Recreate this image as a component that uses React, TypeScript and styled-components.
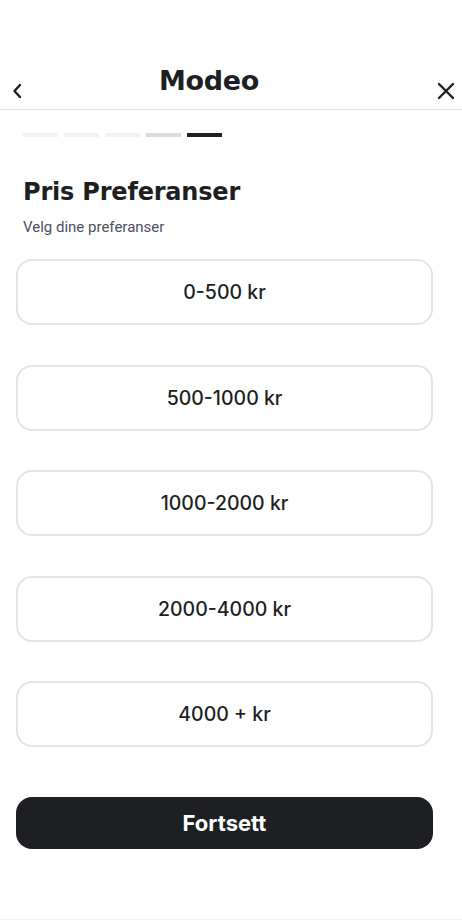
import React, { useState } from 'react';
import styled, { createGlobalStyle } from 'styled-components';

const GlobalStyle = createGlobalStyle`
  html, body {
    margin: 0;
    padding: 0;
    background: #ffffff;
  }
  * {
    box-sizing: border-box;
  }
`;

const Page = styled.div`
  width: 462px;
  height: 920px;
  display: flex;
  flex-direction: column;
  background: #ffffff;
  font-family: Inter, 'Noto Sans', sans-serif;
  color: #1e1f23;
  border-bottom: 1px solid #f3f3f4;
`;

const Header = styled.header`
  height: 110px;
  display: grid;
  grid-template-columns: 40px 1fr 40px;
  align-items: end;
  padding: 0 4px 0 4px;
  border-bottom: 1px solid #e6e6e8;
`;

const IconButton = styled.button<{ $align: 'start' | 'end' }>`
  height: 36px;
  display: flex;
  align-items: center;
  justify-content: ${(p) => (p.$align === 'start' ? 'flex-start' : 'flex-end')};
  padding: 0;
  background: none;
  border: none;
  color: #1e1f23;
  cursor: pointer;
`;

const Logo = styled.h1`
  margin: 0 0 10px;
  text-align: center;
  font-family: 'DejaVu Sans', sans-serif;
  font-weight: 700;
  font-size: 27px;
  letter-spacing: -0.3px;
  line-height: 36px;
  padding-right: 44px;
`;

const Steps = styled.div`
  display: flex;
  gap: 6px;
  padding: 23px 23px 0;
`;

const Step = styled.div<{ $tone: 'idle' | 'prev' | 'active' }>`
  width: 35px;
  height: 4px;
  background: ${(p) =>
    p.$tone === 'active' ? '#1e1f23' : p.$tone === 'prev' ? '#dcdcdd' : '#f2f2f2'};
`;

const Content = styled.main`
  display: flex;
  flex-direction: column;
  padding: 40px 29px 0 16px;
`;

const Title = styled.h2`
  margin: 0 0 0 7px;
  font-family: 'DejaVu Sans', sans-serif;
  font-weight: 700;
  font-size: 24px;
  letter-spacing: -0.2px;
  line-height: 30px;
`;

const Subtitle = styled.p`
  margin: 10px 0 0 7px;
  font-family: Roboto, sans-serif;
  font-size: 15px;
  line-height: 20px;
  color: #4b5160;
`;

const Options = styled.div`
  display: flex;
  flex-direction: column;
  gap: 39.5px;
  margin-top: 22px;
`;

const Option = styled.button<{ $selected: boolean }>`
  height: 66px;
  width: 100%;
  display: flex;
  align-items: center;
  justify-content: center;
  background: #ffffff;
  border: 2px solid ${(p) => (p.$selected ? '#1e1f23' : '#e3e4e8')};
  border-radius: 16px;
  font-family: Inter, sans-serif;
  font-weight: 500;
  font-size: 19.5px;
  color: #1e1f23;
  cursor: pointer;
`;

const Primary = styled.button`
  margin-top: 50px;
  height: 52px;
  width: 100%;
  border: none;
  border-radius: 16px;
  background: #1e1f23;
  color: #ffffff;
  font-family: Inter, sans-serif;
  font-weight: 700;
  font-size: 22px;
  cursor: pointer;
`;

const ranges = ['0-500 kr', '500-1000 kr', '1000-2000 kr', '2000-4000 kr', '4000 + kr'];

const ChevronLeft = () => (
  <svg width="24" height="24" viewBox="0 0 24 24" fill="none" stroke="currentColor" strokeWidth="2.4" strokeLinecap="round" strokeLinejoin="round">
    <path d="M16 6l-5.5 6 5.5 6" />
  </svg>
);

const Close = () => (
  <svg width="24" height="24" viewBox="0 0 24 24" fill="none" stroke="currentColor" strokeWidth="2.4" strokeLinecap="round">
    <path d="M5 5l14 14M19 5L5 19" />
  </svg>
);

const App: React.FC = () => {
  const [selected, setSelected] = useState<number | null>(null);

  return (
    <>
      <GlobalStyle />
      <Page>
        <Header>
          <IconButton $align="start" aria-label="Tilbake">
            <ChevronLeft />
          </IconButton>
          <Logo>Modeo</Logo>
          <IconButton $align="end" aria-label="Lukk">
            <Close />
          </IconButton>
        </Header>
        <Steps>
          <Step $tone="idle" />
          <Step $tone="idle" />
          <Step $tone="idle" />
          <Step $tone="prev" />
          <Step $tone="active" />
        </Steps>
        <Content>
          <Title>Pris Preferanser</Title>
          <Subtitle>Velg dine preferanser</Subtitle>
          <Options>
            {ranges.map((r, i) => (
              <Option key={r} $selected={selected === i} onClick={() => setSelected(i)}>
                {r}
              </Option>
            ))}
          </Options>
          <Primary>Fortsett</Primary>
        </Content>
      </Page>
    </>
  );
};

export default App;
